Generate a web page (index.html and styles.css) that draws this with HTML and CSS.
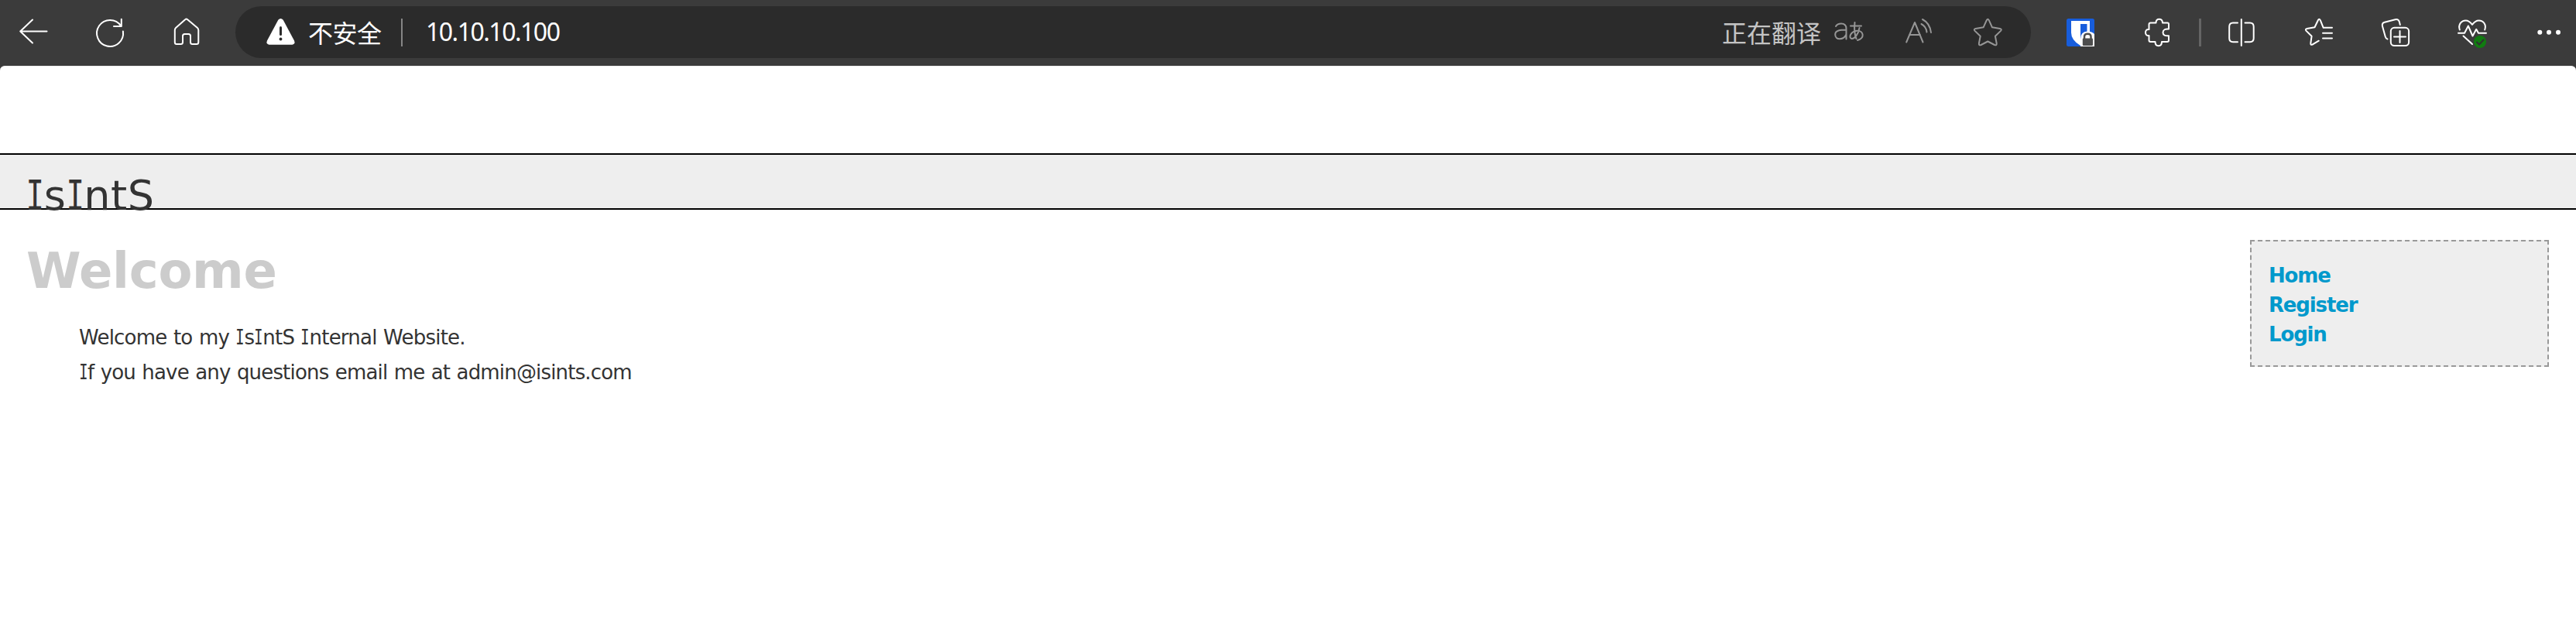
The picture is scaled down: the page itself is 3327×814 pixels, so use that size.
FILE: index.html
```html
<!DOCTYPE html>
<html lang="zh-CN">
<head>
<meta charset="utf-8">
<title>IsIntS</title>
<link rel="stylesheet" href="styles.css">
</head>
<body>
<div class="toolbar">
  <svg class="icon" viewBox="0 0 36 36"><path d="M17 1.5 1.2 16.5 17 31.5M1.2 16.5H35.5"/></svg>
  <svg class="icon reload" viewBox="0 0 36 36"><path d="M34.9 16.5A17 17 0 1 1 32.2 9.5M32.8.8V10H23"/></svg>
  <svg class="icon home" viewBox="0 0 36 36"><path d="M16.2 1.2Q17.7-.2 19.2 1.2L32 12Q33.3 13.2 33.3 15V30.5Q33.3 33 31 33H25.5Q23 33 23 30.5V22.5Q23 20 20.5 20H15.5Q13 20 13 22.5V30.5Q13 33 10.500 33H5Q2.800 33 2.800 30.500V15Q2.800 13.200 4 12Z"/></svg>
  <div class="address">
    <svg class="icon warning" viewBox="0 0 37 36"><path class="solid" d="M15.300 1.800Q18.500-1.800 21.700 1.800L36 28.500Q37.800 33 33.500 33.700H3.500Q-.8 33 1 28.500Z"/><path class="mark" d="M18.500 11.500V20.500"/><circle class="markdot" cx="18.500" cy="26.500" r="1.900"/></svg>
    <span class="security">不安全</span>
    <span class="divider"></span>
    <span class="url">10.10.10.100</span>
    <span class="translating">正在翻译</span>
    <svg class="icon dim translate" viewBox="0 0 38 36"><path d="M2 10Q4 6.500 9 6.500 15.500 6.500 15.500 13V26.500M15.500 14.500C8 14.500 1.200 15 1.200 20.500 1.200 28.500 12 28 15.500 20.500M21 9.500H35M26.500 5C25.500 14 26 20 28.500 26M32.500 12C31.500 20 26 26.500 22.500 26 18 25 21 16.500 29.500 15.800 38.500 15.500 39.500 26 30 28"/></svg>
    <svg class="icon dim read" viewBox="0 0 36 36"><path d="M1.200 30.500 12 5 22.500 30.500M5 21H19M20.500 7Q26.500 10 27.500 17.500M22 1Q31.500 6 33 18"/></svg>
    <svg class="icon dim star" viewBox="0 0 37 36"><path d="M16.800 2.200Q18.300-.5 19.800 2.200L24 11.300 34 12.900Q37 13.600 35 15.900L27.900 22.700 29.700 32Q30 35.300 27 34L18.300 29.500 9.600 34Q6.600 35.300 6.900 32L8.700 22.700 1.600 15.900Q-.4 13.600 2.600 12.900L12.600 11.300Z"/></svg>
  </div>
  <svg class="icon vault" viewBox="0 0 36 36"><rect class="blue" width="36" height="36" rx="2.500"/><path class="white" d="M6 3H30V18Q30 29 18 35 6 28 6 18Z"/><path class="blue" d="M18 7H26.500V18Q25 25 18 28Z"/><path class="white" d="M18 36V27Q18 16.500 27 16.500 33 16.500 36 20V36Z"/><path class="shackle" d="M23 26V23.500Q23 19.800 27.300 19.800 31.500 19.800 31.500 23.500V26"/><rect class="lock" x="20.800" y="25.500" width="13.200" height="9.500" rx="1.200"/></svg>
  <svg class="icon puzzle" viewBox="0 0 36 36"><path d="M9.500 5.500H16.500Q16.500.8 20.700.8T25 5.500H31.500Q33 5.500 33 7.500V13.500C28.500 13 25.500 14.500 25.500 18S28.500 22.500 33 22.200V28Q33 30 31 30H24Q24 35.200 19.800 35.200T15.500 30H9.500Q7.500 30 7.500 28V22C4.500 22.500 3 20.500 3 18S4.500 13.500 7.500 14V7.500Q7.500 5.500 9.500 5.500Z"/></svg>
  <span class="rule"></span>
  <svg class="icon split" viewBox="0 0 36 36"><path d="M13 5.500H7Q2.200 5.500 2.200 10.500V25.500Q2.200 30.200 7 30.200H13M22.500 5.500H29Q33.700 5.500 33.700 10.500V25.500Q33.700 30.200 29 30.200H22.500M17.800 1V35"/></svg>
  <svg class="icon favorites" viewBox="0 0 36 36"><path d="M35 11.800H23.700L19.800 2.200Q18.200-.5 16.800 2.200L12.500 11.300 2.500 13Q-.2 13.800 1.600 15.900L8.600 22.700 7.300 32Q7 34.500 9.500 33.600L17.800 28.700M23 18.800H35M23 25.500H35"/></svg>
  <svg class="icon collections" viewBox="0 0 36 36"><path d="M7.500 26.500Q5.500 26 4.800 23.500L.9 9.500Q.2 5.800 3.800 4.800L17.500 1.200Q21.500.2 22.800 4L23.800 8"/><rect x="11.800" y="11.800" width="23.300" height="23.300" rx="4.500"/><path d="M23.500 16V31M16 23.500H31"/></svg>
  <svg class="icon health" viewBox="0 0 36 38"><path d="M1.800 14.500C-.5 7.500 4 2.500 9.500 2.500Q14 2.500 18 7.800 22 2.500 26.500 2.500C32.500 2.500 36.500 8 34.200 14.500M0 18.800H8L12.800 9.500 18.500 22.500 23.200 13.800 26 18.800H36M6.500 22.500 18 33"/><circle class="green" cx="28" cy="30" r="8"/><path class="tick" d="M24 30.500 27 33.500 32.500 27.500"/></svg>
  <svg class="icon more" viewBox="0 0 36 36"><circle class="solid" cx="6.300" cy="17.800" r="3"/><circle class="solid" cx="18" cy="17.800" r="3"/><circle class="solid" cx="30" cy="17.800" r="3"/></svg>
</div>
<div class="page">
  <header class="banner"><div class="brand"><span class="cap">I</span>s<span class="cap">I</span>ntS</div></header>
  <div class="columns">
    <main class="content">
      <h1 class="heading">Welcome</h1>
      <p class="text intro">Welcome to my <span class="cap">I</span>s<span class="cap">I</span>ntS <span class="cap">I</span>nternal Website.</p>
      <p class="text contact"><span class="cap">I</span>f you have any questions email me at admin@isints.com</p>
    </main>
    <nav class="menu">
      <a class="link">Home</a>
      <a class="link">Register</a>
      <a class="link">Login</a>
    </nav>
  </div>
</div>
</body>
</html>
```
FILE: styles.css
```css
* { box-sizing: border-box; }
body { margin: 0; background: #3b3b3b; color: #333; font-family: Verdana, "DejaVu Sans", sans-serif; }
.toolbar { display: flex; align-items: center; height: 85px; padding: 0 17px 1px 25px; background: #3b3b3b; font-family: "Noto Sans", "Noto Sans CJK SC", sans-serif; font-size: 32px; }
.icon { display: block; flex: none; width: 36px; height: 36px; overflow: visible; fill: none; stroke: #fff; stroke-width: 2; stroke-linecap: round; stroke-linejoin: round; }
.reload, .home, .puzzle, .collections, .health, .more { margin-left: 63px; }
.health { height: 38px; margin-top: 2px; }
.address { display: flex; align-items: center; flex: none; width: 2319px; height: 67px; margin: 0 0 1px 45px; padding: 1px 37px 0 40px; border-radius: 34px; background: #2b2b2b; color: #fff; }
.warning { width: 37px; }
.solid { fill: #fff; stroke: none; }
.mark { stroke: #2b2b2b; stroke-width: 3; }
.markdot { fill: #2b2b2b; stroke: none; }
.security { width: 96px; margin-left: 17px; padding-bottom: 3px; line-height: 40px; letter-spacing: -0.5px; white-space: nowrap; font-family: "Noto Sans CJK SC", sans-serif; }
.divider { width: 2px; height: 36px; margin-left: 24px; background: #868686; }
.url { margin-left: 30px; padding-bottom: 2px; line-height: 40px; letter-spacing: -1.5px; }
.translating { margin-left: auto; padding-bottom: 3px; color: #c4c4c4; line-height: 40px; font-family: "Noto Sans CJK SC", sans-serif; }
.dim { stroke: #969696; }
.translate { width: 38px; margin-left: 17px; }
.read { margin-left: 54px; }
.star { width: 37px; margin-left: 52px; }
.vault { margin-left: 46px; }
.blue { fill: #175ddc; stroke: none; }
.white { fill: #fff; stroke: none; }
.lock { fill: #4d4d4d; stroke: none; }
.shackle { stroke: #4d4d4d; stroke-width: 2.5; }
.rule { width: 3px; height: 36px; margin-left: 36px; background: #656565; }
.split { margin-left: 34px; }
.favorites { margin-left: 64px; }
.green { fill: #107c10; stroke: none; }
.tick { stroke: #303030; }
.page { height: 729px; padding-top: 112px; border-top: 1px solid #eee; border-radius: 6px 6px 0 0; background: #fff; }
.banner { height: 73px; padding: 23px 0 0 34px; border-top: 2px solid #000; border-bottom: 2px solid #000; background: #eee; }
.brand { font-size: 54px; line-height: 60px; letter-spacing: 0.5px; }
/* Capital I with serifs, narrowed to proportional width */
.cap { display: inline-block; margin: 0 -0.09em; font-family: "DejaVu Sans Mono", monospace; line-height: 1; letter-spacing: 0; transform: scaleX(0.72); }
.columns { display: flex; justify-content: space-between; align-items: flex-start; padding: 39px 35px 0 34px; }
.heading { margin: 5px 0 29px; color: #ccc; font-size: 64px; line-height: 70px; letter-spacing: -0.3px; }
.text { margin: 0 0 0 68px; font-size: 26px; line-height: 45px; white-space: nowrap; word-spacing: 0.9px; }
.intro { letter-spacing: -0.77px; }
.contact { letter-spacing: -0.82px; }
.menu { width: 386px; height: 164px; padding: 25px 23px 21px 22px; border: 2px dashed #999; background: #eee; }
.link { display: block; color: #09c; font-size: 26px; font-weight: bold; line-height: 38px; letter-spacing: -1.15px; }
```
